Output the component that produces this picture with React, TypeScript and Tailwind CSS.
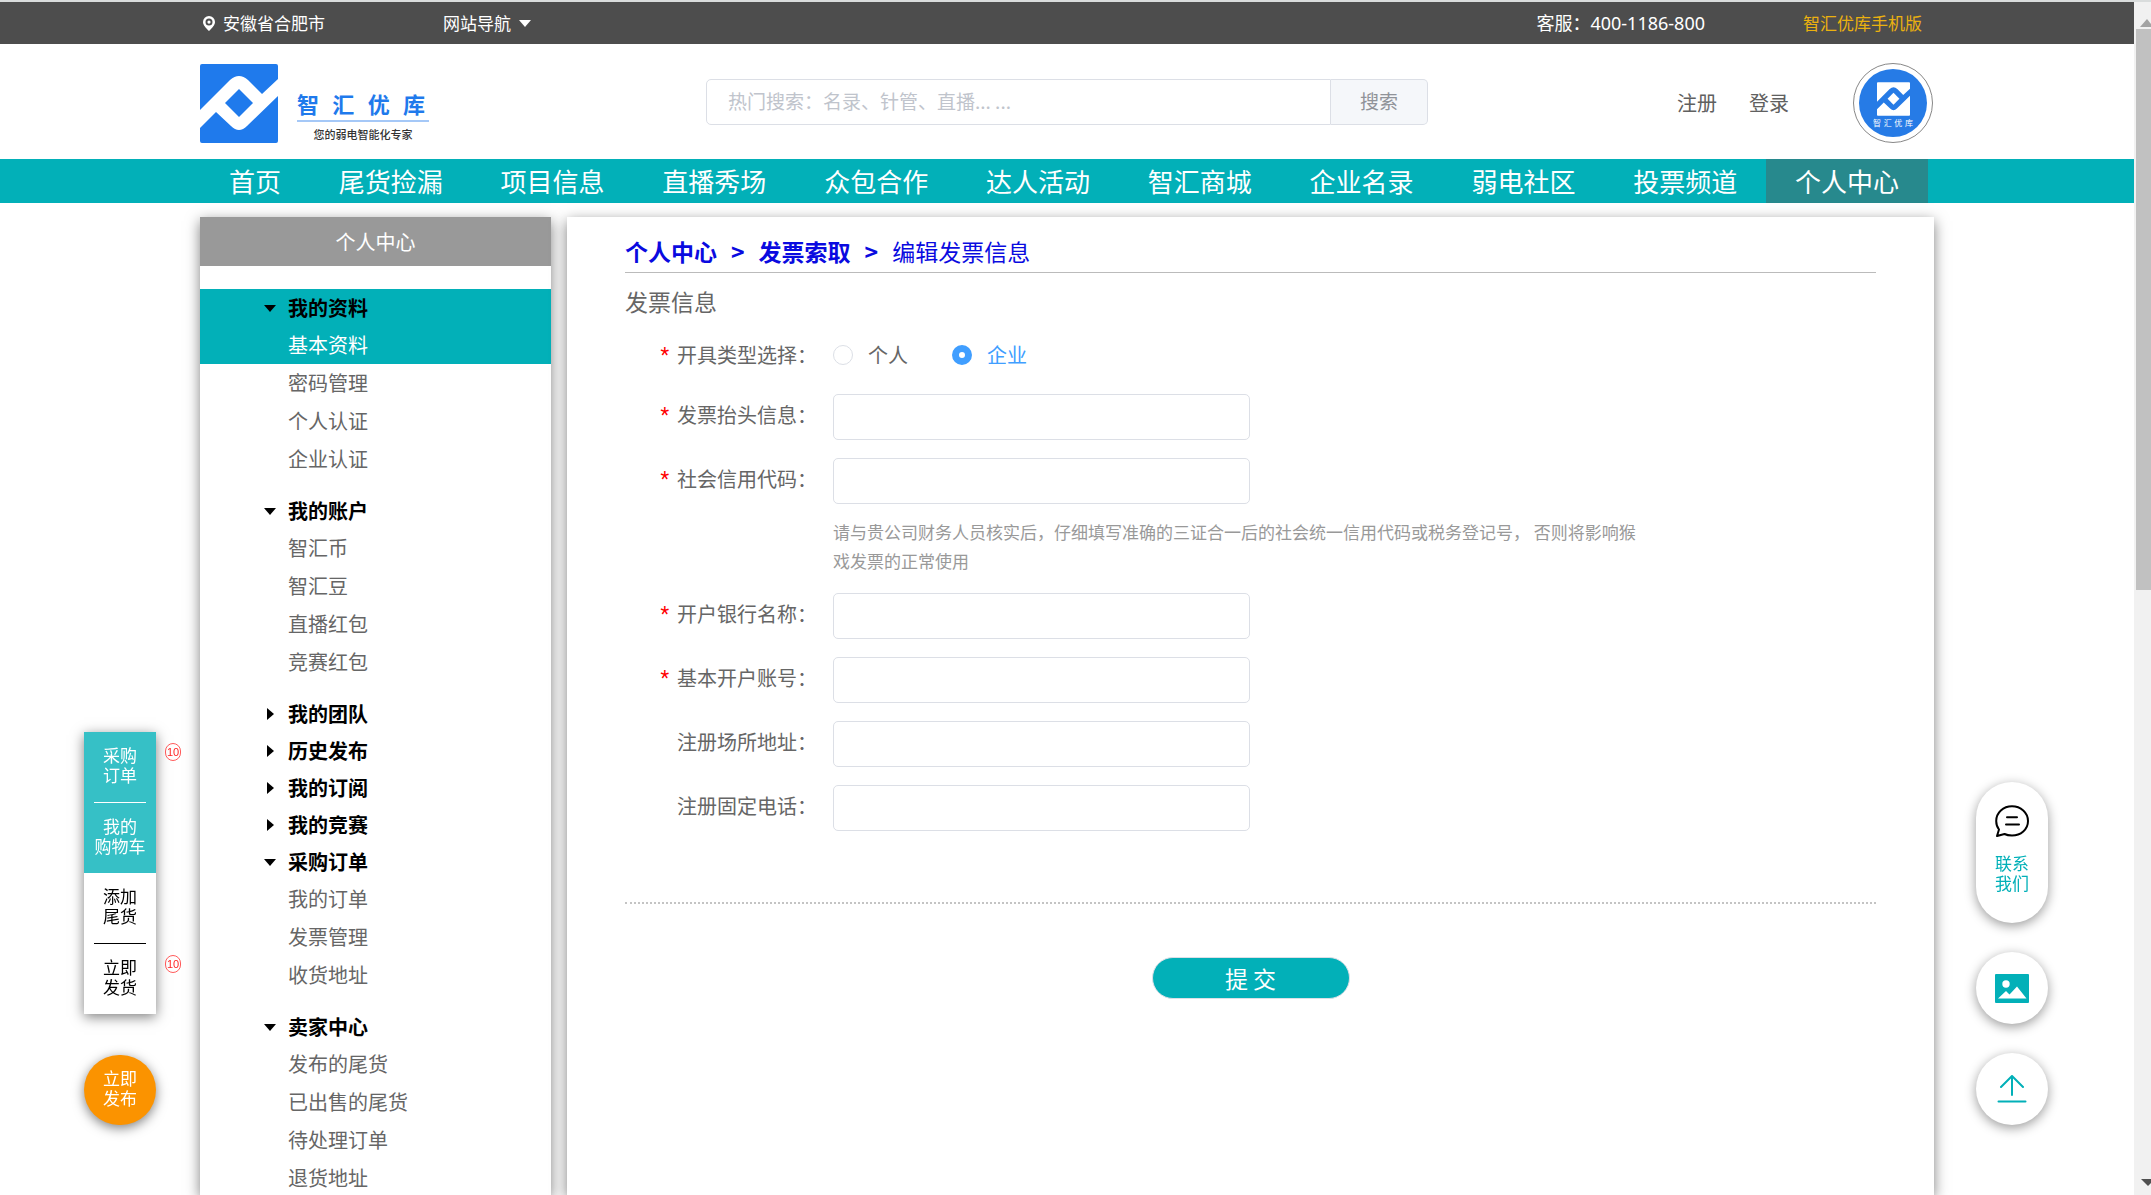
import React, { useState } from "react";

const NAV_ITEMS = [
  "首页",
  "尾货捡漏",
  "项目信息",
  "直播秀场",
  "众包合作",
  "达人活动",
  "智汇商城",
  "企业名录",
  "弱电社区",
  "投票频道",
  "个人中心",
];

type Group = { title: string; items: string[] };

const GROUPS: Group[] = [
  { title: "我的资料", items: ["基本资料", "密码管理", "个人认证", "企业认证"] },
  { title: "我的账户", items: ["智汇币", "智汇豆", "直播红包", "竞赛红包"] },
  { title: "我的团队", items: [] },
  { title: "历史发布", items: [] },
  { title: "我的订阅", items: [] },
  { title: "我的竞赛", items: [] },
  { title: "采购订单", items: ["我的订单", "发票管理", "收货地址"] },
  { title: "卖家中心", items: ["发布的尾货", "已出售的尾货", "待处理订单", "退货地址"] },
];

function LogoMark({ className }: { className: string }) {
  return (
    <svg viewBox="0 0 78 79" className={className} fill="currentColor" aria-hidden="true">
      <path d="M2 0H76Q78 0 78 2V15L62 30L48 16Q39 8 30 16L0 46V2Q0 0 2 0Z" />
      <path d="M0 64L16 48L31 62Q39 70 47 62L78 32V77Q78 79 76 79H2Q0 79 0 77Z" />
      <path d="M39 25L53 39L39 53L25 39Z" />
    </svg>
  );
}

function TopBar() {
  return (
    <div className="bg-[#4d4d4d] text-[17px] text-white">
      <div className="mx-auto flex h-[42px] w-full max-w-[1734px] items-center">
        <svg viewBox="0 0 12 15" className="ml-[3px] h-[15px] w-3" aria-hidden="true">
          <path
            fillRule="evenodd"
            fill="#fff"
            d="M6 0a6 6 0 0 1 6 6c0 3.200-3 6-6 9C3 12 0 9.200 0 6a6 6 0 0 1 6-6Zm0 2.600a3.500 3.500 0 1 0 0 7 3.500 3.500 0 0 0 0-7Z"
          />
          <circle cx="6" cy="6.100" r="1.600" fill="#fff" />
        </svg>
        <span className="ml-2">安徽省合肥市</span>
        <a href="#sites" className="ml-[118px] flex items-center gap-2">
          网站导航
          <svg viewBox="0 0 12 7" className="h-[7px] w-3" aria-hidden="true">
            <path d="M0 0H12L6 7Z" fill="#fff" />
          </svg>
        </a>
        <span className="mr-[98px] ml-auto font-['Noto_Sans','Noto_Sans_CJK_SC',sans-serif] text-[18px] leading-6">
          客服：400-1186-800
        </span>
        <a href="#mobile" className="mr-3 text-[#ebb10f]">
          智汇优库手机版
        </a>
      </div>
    </div>
  );
}

function Header() {
  return (
    <header className="mx-auto flex h-[115px] w-full max-w-[1734px] items-center">
      <a href="#home" className="mt-1 flex items-center">
        <LogoMark className="h-[79px] w-[78px] text-[#1f7aec]" />
        <span className="mt-6 ml-[19px] flex w-[132px] flex-col">
          <span className="flex justify-between border-b-2 border-[#a5c8f7] pr-1 pb-1 text-[22px] leading-[26px] font-bold text-[#1f7aec]">
            <span>智</span>
            <span>汇</span>
            <span>优</span>
            <span>库</span>
          </span>
          <span className="mt-1 text-center text-[11px] leading-4 font-medium text-[#333]">
            您的弱电智能化专家
          </span>
        </span>
      </a>
      <form className="mr-auto ml-[277px] flex h-[46px] w-[722px]" onSubmit={(e) => e.preventDefault()}>
        <input
          type="search"
          aria-label="搜索"
          placeholder="热门搜索：名录、针管、直播... ..."
          className="min-w-0 flex-1 rounded-l-[5px] border border-[#dcdfe6] px-[21px] text-[19px] outline-none placeholder:text-[#c0c4cc]"
        />
        <button
          type="submit"
          className="w-[97px] rounded-r-[5px] border border-l-0 border-[#dcdfe6] bg-[#f5f7fa] text-[19px] text-[#909399]"
        >
          搜索
        </button>
      </form>
      <div className="mt-[2px] flex items-center pr-px text-xl text-[#606060]">
        <a href="#register">注册</a>
        <a href="#login" className="ml-8">
          登录
        </a>
        <a
          href="#me"
          aria-label="我的头像"
          className="ml-16 flex size-20 items-center justify-center rounded-full border border-[#888] bg-white"
        >
          <span className="flex size-[68px] flex-col items-center rounded-full bg-[#267be6] pt-[13px] text-white">
            <LogoMark className="h-[34px] w-[33px]" />
            <span className="mt-[2px] flex w-10 justify-between text-[8px] leading-[10px]">
              <span>智</span>
              <span>汇</span>
              <span>优</span>
              <span>库</span>
            </span>
          </span>
        </a>
      </div>
    </header>
  );
}

function MainNav() {
  return (
    <nav className="bg-[#02b0b8]">
      <div className="mx-auto flex h-11 w-full max-w-[1734px] pr-[6px] text-center text-[26px] leading-[44px] text-white">
        {NAV_ITEMS.map((item) => (
          <a
            key={item}
            href={"#" + item}
            className={
              item === "个人中心"
                ? "flex-auto bg-[#27898d] px-7 whitespace-nowrap"
                : "flex-auto px-7 whitespace-nowrap"
            }
          >
            {item}
          </a>
        ))}
      </div>
    </nav>
  );
}

function Caret({ open }: { open: boolean }) {
  return (
    <svg viewBox="0 0 12 12" className="size-3" aria-hidden="true">
      <path d={open ? "M0 3H12L6 10Z" : "M3 0V12L10 6Z"} />
    </svg>
  );
}

function Sidebar() {
  return (
    <aside className="w-[351px] shrink-0 bg-white shadow-[0_4px_13px_rgba(0,0,0,0.5)]">
      <h2 className="mb-[23px] bg-[#999] text-center text-xl leading-[49px] text-white">个人中心</h2>
      {GROUPS.map((group, index) => (
        <section key={group.title} className={group.items.length ? "mb-[14px]" : ""}>
          <button
            type="button"
            className={
              index === 0
                ? "flex h-[37px] w-full items-center gap-3 bg-[#02b0b8] pl-16 text-xl font-bold text-black"
                : "flex h-[37px] w-full items-center gap-3 pl-16 text-xl font-bold text-black"
            }
          >
            <Caret open={group.items.length > 0} />
            {group.title}
          </button>
          {group.items.map((item) => (
            <a
              key={item}
              href={"#" + item}
              className={
                item === "基本资料"
                  ? "block bg-[#02b0b8] pl-[88px] text-xl leading-[38px] text-white"
                  : "block pl-[88px] text-xl leading-[38px] text-[#666]"
              }
            >
              {item}
            </a>
          ))}
        </section>
      ))}
    </aside>
  );
}

function FieldLabel({ id, text, required }: { id?: string; text: string; required?: boolean }) {
  const Tag = id ? "label" : "span";
  return (
    <Tag
      {...(id ? { htmlFor: id } : {})}
      className="flex w-[208px] shrink-0 justify-end gap-2 pr-4 text-xl leading-[42px] text-[#666]"
    >
      {required && <span className="font-[Roboto] text-[#f00]">*</span>}
      {text}：
    </Tag>
  );
}

function Field({ id, text, required }: { id: string; text: string; required?: boolean }) {
  return (
    <div className="flex items-start">
      <FieldLabel id={id} text={text} required={required} />
      <input
        id={id}
        type="text"
        className="h-[46px] w-[417px] rounded-[5px] border border-[#dcdfe6] px-4 text-xl text-[#666] outline-none"
      />
    </div>
  );
}

function InvoiceForm() {
  const [kind, setKind] = useState("企业");
  return (
    <form onSubmit={(e) => e.preventDefault()}>
      <h1 className="mt-[10px] text-[23px] leading-9 text-[#666]">发票信息</h1>
      <div className="mt-[15px] flex items-center" role="radiogroup" aria-label="开具类型选择">
        <FieldLabel text="开具类型选择" required />
        {["个人", "企业"].map((option) => (
          <label
            key={option}
            className={
              kind === option
                ? "mr-11 flex items-center gap-[15px] text-xl text-[#409eff]"
                : "mr-11 flex items-center gap-[15px] text-xl text-[#666]"
            }
          >
            <input
              type="radio"
              name="kind"
              value={option}
              checked={kind === option}
              onChange={() => setKind(option)}
              className="size-5 appearance-none rounded-full border border-[#dcdfe6] bg-white checked:border-[7px] checked:border-[#409eff]"
            />
            {option}
          </label>
        ))}
      </div>
      <div className="mt-[18px] flex flex-col gap-[18px]">
        <Field id="title" text="发票抬头信息" required />
        <div>
          <Field id="credit" text="社会信用代码" required />
          <p className="mt-[13px] ml-[208px] max-w-[816px] text-[17px] leading-[29px] text-[#999]">
            请与贵公司财务人员核实后，仔细填写准确的三证合一后的社会统一信用代码或税务登记号， 否则将影响猴戏发票的正常使用
          </p>
        </div>
        <Field id="bank" text="开户银行名称" required />
        <Field id="account" text="基本开户账号" required />
        <Field id="address" text="注册场所地址" />
        <Field id="phone" text="注册固定电话" />
      </div>
      <div className="mt-[71px] border-t-2 border-dotted border-[#c4c4c4] pt-[53px] text-center">
        <button
          type="submit"
          className="h-[42px] w-[198px] rounded-full border border-[#dcdfe6] bg-[#02b0b8] text-[23px] leading-none text-white"
        >
          提 交
        </button>
      </div>
    </form>
  );
}

function MainPanel() {
  return (
    <main className="min-w-0 flex-1 bg-white px-[58px] pt-[14px] shadow-[0_4px_13px_rgba(0,0,0,0.5)]">
      <nav
        aria-label="面包屑"
        className="flex gap-[14px] border-b border-[#bbb] pb-px text-[23px] leading-10 font-bold text-[#0a0ae0]"
      >
        <a href="#center">个人中心</a>
        <span>&gt;</span>
        <a href="#invoice">发票索取</a>
        <span>&gt;</span>
        <span className="font-normal">编辑发票信息</span>
      </nav>
      <InvoiceForm />
    </main>
  );
}

function Badge() {
  return (
    <span className="absolute top-[11px] left-[81px] flex h-[18px] w-4 items-center justify-center rounded-full border border-[#ff5a5a] text-[11px] leading-none text-[#f22]">
      10
    </span>
  );
}

function QuickLinks() {
  const cell = "relative flex h-[70px] items-center justify-center text-center";
  return (
    <div className="fixed bottom-[70px] left-[84px] w-[72px] font-['Liberation_Sans','Noto_Sans_CJK_SC',sans-serif] text-[17px] leading-5">
      <div className="shadow-[0_3px_12px_rgba(0,0,0,0.5)]">
        <div className="bg-[#36c0c6] text-white">
          <a href="#orders" className={cell}>
            采购
            <br />
            订单
            <Badge />
          </a>
          <hr className="mx-[10px] border-white" />
          <a href="#cart" className={cell}>
            我的
            <br />
            购物车
          </a>
        </div>
        <div className="bg-white text-black">
          <a href="#add" className={cell}>
            添加
            <br />
            尾货
          </a>
          <hr className="mx-[10px] border-black" />
          <a href="#ship" className={cell}>
            立即
            <br />
            发货
            <Badge />
          </a>
        </div>
      </div>
      <button
        type="button"
        className="mt-[41px] block h-[70px] w-[72px] rounded-full bg-[#fb9300] text-white shadow-[0_3px_12px_rgba(0,0,0,0.5)]"
      >
        立即
        <br />
        发布
      </button>
    </div>
  );
}

function ServiceButtons() {
  return (
    <div className="fixed right-[103px] bottom-[70px] flex w-[72px] flex-col gap-[29px] font-['Liberation_Sans','Noto_Sans_CJK_SC',sans-serif] text-[17px] leading-5 text-[#02b0b8]">
      <button
        type="button"
        className="flex h-[141px] flex-col items-center rounded-full bg-white pt-[23px] shadow-[0_3px_12px_rgba(0,0,0,0.4)]"
      >
        <svg
          viewBox="0 0 34 32"
          className="h-8 w-[34px] text-black"
          fill="none"
          stroke="currentColor"
          strokeWidth="2"
          strokeLinecap="round"
          strokeLinejoin="round"
          aria-hidden="true"
        >
          <path d="M2 31L4 24.500C2 22 1.200 19 1.200 16C1.200 7.500 8.300 1.200 17 1.200S33 7.500 33 16S25.700 30.500 17 30.500C14 30.500 11.500 30 9.500 29Z" />
          <path d="M12 12.300H22M11 19.500H24" />
        </svg>
        <span className="mt-[18px]">
          联系
          <br />
          我们
        </span>
      </button>
      <button
        type="button"
        aria-label="图片"
        className="flex size-[72px] items-center justify-center rounded-full bg-white shadow-[0_3px_12px_rgba(0,0,0,0.4)]"
      >
        <svg viewBox="0 0 34 29" className="h-[29px] w-[34px]" aria-hidden="true">
          <rect width="34" height="29" rx="1" fill="currentColor" />
          <circle cx="11" cy="10" r="3.700" fill="#fff" />
          <path d="M3 24.500L11 17L14.500 20.500L22 12.500L31.500 24.500Z" fill="#fff" />
        </svg>
      </button>
      <button
        type="button"
        aria-label="返回顶部"
        className="flex size-[72px] items-center justify-center rounded-full bg-white shadow-[0_3px_12px_rgba(0,0,0,0.4)]"
      >
        <svg
          viewBox="0 0 30 28"
          className="h-7 w-[30px]"
          fill="none"
          stroke="currentColor"
          strokeWidth="2"
          strokeLinecap="round"
          strokeLinejoin="round"
          aria-hidden="true"
        >
          <path d="M15 20V1.500M4 12L15 1L26 12M1.500 26.500H28.500" />
        </svg>
      </button>
    </div>
  );
}

function ScrollTrack() {
  return (
    <div className="flex w-[17px] shrink-0 flex-col bg-[#f1f1f1]" aria-hidden="true">
      <div className="flex h-[27px] items-end justify-end overflow-hidden pb-[2px]">
        <svg viewBox="0 0 11 8" className="h-2 w-[11px]">
          <path d="M0 8L7 0L11 5V8Z" fill="#a3a3a3" />
        </svg>
      </div>
      <div className="ml-[2px] h-[47%] bg-[#c1c1c1]" />
      <div className="mt-auto flex justify-end pb-[9px]">
        <svg viewBox="0 0 10 7" className="h-[7px] w-[10px]">
          <path d="M0 0H10V4L7 7Z" fill="#505050" />
        </svg>
      </div>
    </div>
  );
}

export default function App() {
  return (
    <div className="flex h-screen overflow-hidden border-t-2 border-[#d9dcdc] bg-white font-['Noto_Sans_CJK_SC',sans-serif]">
      <div className="flex min-w-0 flex-1 flex-col">
        <TopBar />
        <Header />
        <MainNav />
        <div className="mx-auto mt-[14px] flex min-h-0 w-full max-w-[1734px] flex-1 gap-4">
          <Sidebar />
          <MainPanel />
        </div>
      </div>
      <ScrollTrack />
      <QuickLinks />
      <ServiceButtons />
    </div>
  );
}
